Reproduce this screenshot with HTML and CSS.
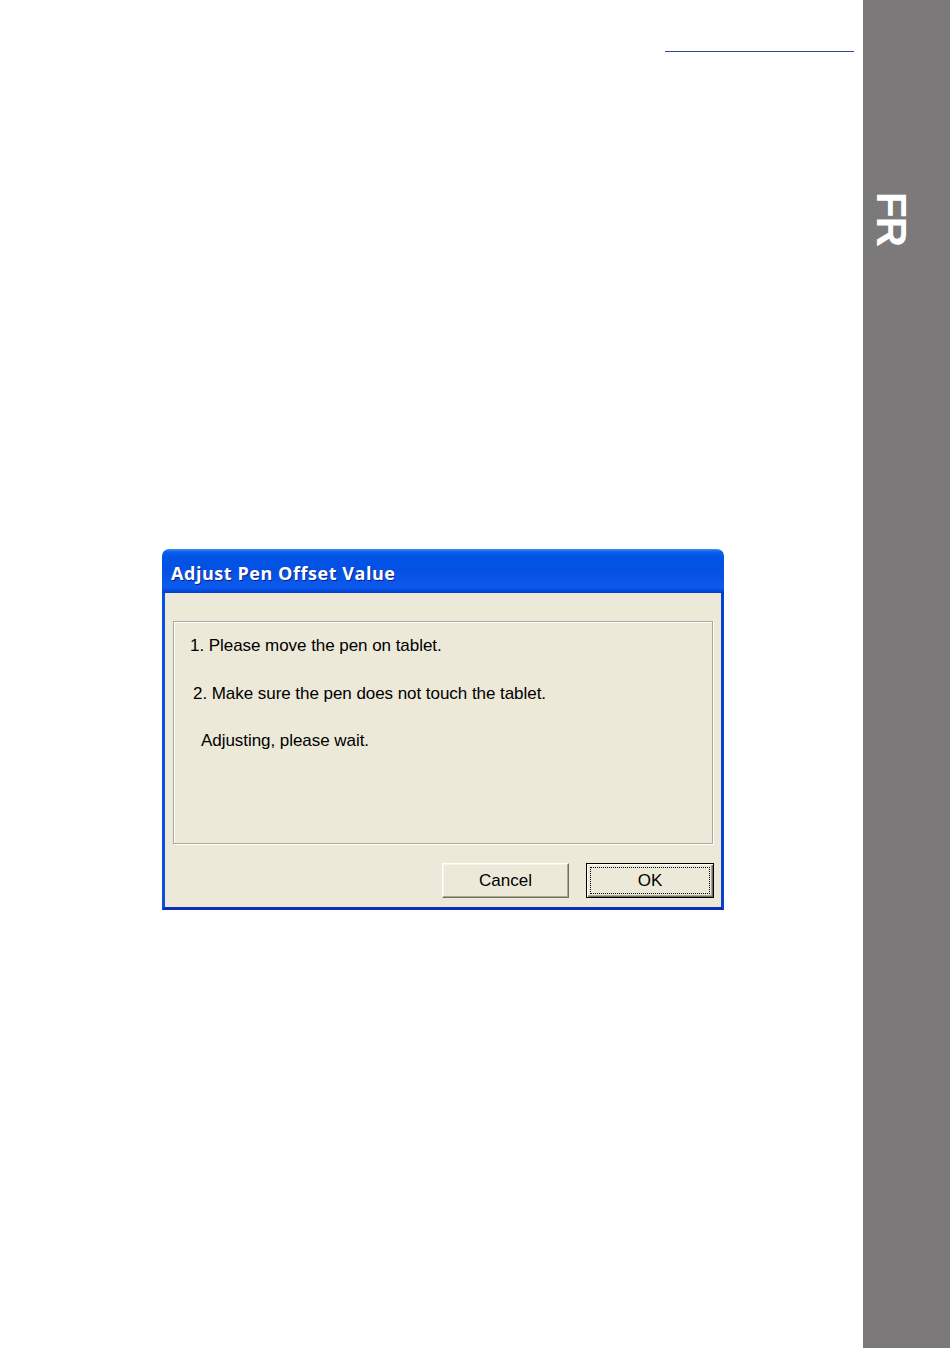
FILE: index.html
```html
<!DOCTYPE html>
<html>
<head>
<meta charset="utf-8">
<link rel="stylesheet" href="styles.css">
</head>
<body>
<div class="page">
  <div class="main">
    <div class="rule"></div>
    <div class="window">
      <div class="titlebar"><span class="title">Adjust Pen Offset Value</span></div>
      <div class="body">
        <div class="panel">
          <p class="line l1">1. Please move the pen on tablet.</p>
          <p class="line l2">2. Make sure the pen does not touch the tablet.</p>
          <p class="line l3">Adjusting, please wait.</p>
        </div>
        <div class="buttons">
          <button class="btn">Cancel</button>
          <button class="btn default"><span class="focus">OK</span></button>
        </div>
      </div>
    </div>
  </div>
  <div class="sidebar"><span class="lang">FR</span></div>
</div>
</body>
</html>
```
FILE: styles.css
```css
html, body {
  margin: 0;
  padding: 0;
  background: #ffffff;
}
.page {
  display: flex;
  width: 950px;
  height: 1348px;
}
.main {
  flex: 1;
  display: flex;
  flex-direction: column;
}
.rule {
  margin-top: 51px;
  margin-left: 665px;
  width: 189px;
  height: 1px;
  background: #34469c;
}
.window {
  margin-top: 497px;
  margin-left: 162px;
  width: 562px;
  height: 361px;
  display: flex;
  flex-direction: column;
}
.titlebar {
  height: 44px;
  border-radius: 7px 7px 0 0;
  background: linear-gradient(to bottom, #3d8ff7 0px, #0a5eec 3px, #0055e6 8px, #0450e2 20px, #0a56e8 32px, #0b5bee 38px, #0449dc 42px, #003bc8 44px);
  display: flex;
  align-items: center;
  padding-left: 9px;
  padding-top: 3px;
  box-sizing: border-box;
}
.title {
  font-family: "Open Sans", "DejaVu Sans", sans-serif;
  font-weight: 700;
  font-size: 18px;
  color: #ffffff;
  text-shadow: 1px 1px 0 #0a1e8c;
  letter-spacing: 0.55px;
}
.body {
  flex: 1;
  background: #ece9d8;
  border-left: 3px solid #0b4fe0;
  border-right: 3px solid #0b3fd0;
  border-bottom: 3px solid #0a2fb6;
  padding: 28px 7px 0 8px;
  display: flex;
  flex-direction: column;
}
.panel {
  height: 223px;
  box-sizing: border-box;
  width: 540px;
  border: 1px solid #aca899;
  box-shadow: inset 1px 1px 0 #ffffff, 1px 1px 0 #ffffff;
  padding: 14px 0 0 16px;
  font-family: "Liberation Sans", Arial, sans-serif;
  font-size: 17px;
  letter-spacing: -0.05px;
  color: #000;
}
.line {
  margin: 0;
  line-height: 20px;
}
.l2 {
  margin-top: 28px;
  padding-left: 3px;
}
.l3 {
  margin-top: 27px;
  padding-left: 11px;
}
.buttons {
  margin-top: 19px;
  display: flex;
  justify-content: flex-end;
  gap: 17px;
}
.btn {
  width: 128px;
  height: 35px;
  padding: 0;
  margin: 0;
  background: #ece9d8;
  font-family: "Liberation Sans", Arial, sans-serif;
  font-size: 17px;
  color: #000;
  border: 1px solid;
  border-color: #ffffff #716f64 #716f64 #ffffff;
  box-shadow: inset -1px -1px 0 #aca899, inset 1px 1px 0 #f5f4ea;
  display: flex;
  align-items: center;
  justify-content: center;
  box-sizing: border-box;
}
.btn:first-child {
  width: 127px;
}
.default {
  border: 1px solid #000;
  box-shadow: inset 1px 1px 0 #ffffff, inset -1px -1px 0 #716f64, inset -2px -2px 0 #aca899;
  padding: 3px;
}
.focus {
  flex: 1;
  align-self: stretch;
  border: 1px dotted #000;
  display: flex;
  align-items: center;
  justify-content: center;
}
.sidebar {
  width: 87px;
  background: #7b797a;
}
.lang {
  display: block;
  writing-mode: vertical-rl;
  font-family: "Liberation Sans", Arial, sans-serif;
  font-weight: 700;
  font-size: 42px;
  line-height: 32px;
  color: #ffffff;
  margin-top: 192px;
  margin-left: 12px;
  letter-spacing: -1px;
}
```
